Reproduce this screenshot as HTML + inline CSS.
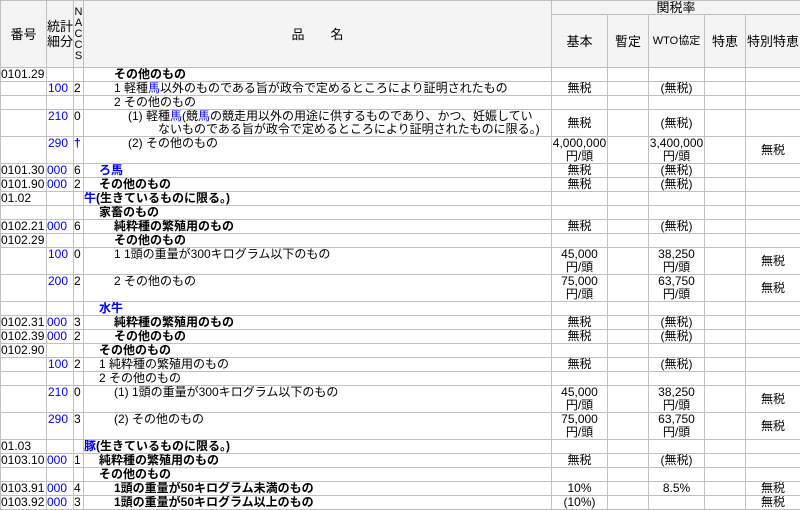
<!DOCTYPE html>
<html><head><meta charset="utf-8"><style>
body{margin:0;background:#fff;width:800px;height:500px;overflow:hidden}
table{border-collapse:collapse;table-layout:fixed;width:800px;font-family:"Liberation Sans","Noto Sans CJK JP",sans-serif;font-size:12px;line-height:13px;color:#000}
td{border:1px solid #c0c0c0;padding:0;vertical-align:top;white-space:nowrap;overflow:hidden}
thead td{background:#f4f4f4;vertical-align:middle;text-align:center;font-size:13px}
.b{color:#00f}
.c{text-align:center}
.r{padding-left:1px}
.m{vertical-align:middle;text-align:center}
.bd{font-weight:bold}
.i1{padding-left:15px}.i2{padding-left:30px}.i3{padding-left:44px}
</style></head><body>
<table>
<colgroup><col style="width:46px"><col style="width:27px"><col style="width:10px"><col style="width:468px"><col style="width:56px"><col style="width:41px"><col style="width:56px"><col style="width:41px"><col style="width:55px"></colgroup>
<thead>
<tr style="height:14px"><td rowspan="2">番号</td><td rowspan="2" style="line-height:15px">統計<br>細分</td><td rowspan="2" style="line-height:11px;font-size:11px">N<br>A<br>C<br>C<br>S</td><td rowspan="2">品　　名</td><td colspan="5" style="height:13px">関税率</td></tr>
<tr style="height:53px"><td>基本</td><td>暫定</td><td style="font-size:11px">WTO協定</td><td>特恵</td><td>特別特恵</td></tr>
</thead>
<tbody>
<tr style="height:13px"><td>0101.29</td><td></td><td></td><td class="i2 bd">その他のもの</td><td></td><td></td><td></td><td></td><td></td></tr>
<tr style="height:14px"><td></td><td class="b r">100</td><td>2</td><td class="i2">1 軽種<span class="b">馬</span>以外のものである旨が政令で定めるところにより証明されたもの</td><td class="c">無税</td><td></td><td class="c">(無税)</td><td></td><td></td></tr>
<tr style="height:13px"><td></td><td></td><td></td><td class="i2">2 その他のもの</td><td></td><td></td><td></td><td></td><td></td></tr>
<tr style="height:27px"><td></td><td class="b r">210</td><td>0</td><td class="i2"><span style="padding-left:14px">(1) 軽種<span class="b">馬</span>(競<span class="b">馬</span>の競走用以外の用途に供するものであり、かつ、妊娠してい</span><br><span style="padding-left:44px">ないものである旨が政令で定めるところにより証明されたものに限る。)</span></td><td class="m">無税</td><td></td><td class="m">(無税)</td><td></td><td></td></tr>
<tr style="height:27px"><td></td><td class="b r">290</td><td class="b bd">†</td><td class="i3">(2) その他のもの</td><td class="c">4,000,000<br>円/頭</td><td></td><td class="c">3,400,000<br>円/頭</td><td></td><td class="m">無税</td></tr>
<tr style="height:14px"><td>0101.30</td><td class="b">000</td><td>6</td><td class="i1 bd b">ろ馬</td><td class="c">無税</td><td></td><td class="c">(無税)</td><td></td><td></td></tr>
<tr style="height:14px"><td>0101.90</td><td class="b">000</td><td>2</td><td class="i1 bd">その他のもの</td><td class="c">無税</td><td></td><td class="c">(無税)</td><td></td><td></td></tr>
<tr style="height:14px"><td>01.02</td><td></td><td></td><td class="bd"><span class="b">牛</span>(生きているものに限る。)</td><td></td><td></td><td></td><td></td><td></td></tr>
<tr style="height:13px"><td></td><td></td><td></td><td class="i1 bd">家畜のもの</td><td></td><td></td><td></td><td></td><td></td></tr>
<tr style="height:14px"><td>0102.21</td><td class="b">000</td><td>6</td><td class="i2 bd">純粋種の繁殖用のもの</td><td class="c">無税</td><td></td><td class="c">(無税)</td><td></td><td></td></tr>
<tr style="height:14px"><td>0102.29</td><td></td><td></td><td class="i2 bd">その他のもの</td><td></td><td></td><td></td><td></td><td></td></tr>
<tr style="height:27px"><td></td><td class="b r">100</td><td>0</td><td class="i2">1 1頭の重量が300キログラム以下のもの</td><td class="c">45,000<br>円/頭</td><td></td><td class="c">38,250<br>円/頭</td><td></td><td class="m">無税</td></tr>
<tr style="height:27px"><td></td><td class="b r">200</td><td>2</td><td class="i2">2 その他のもの</td><td class="c">75,000<br>円/頭</td><td></td><td class="c">63,750<br>円/頭</td><td></td><td class="m">無税</td></tr>
<tr style="height:14px"><td></td><td></td><td></td><td class="i1 bd b">水牛</td><td></td><td></td><td></td><td></td><td></td></tr>
<tr style="height:14px"><td>0102.31</td><td class="b">000</td><td>3</td><td class="i2 bd">純粋種の繁殖用のもの</td><td class="c">無税</td><td></td><td class="c">(無税)</td><td></td><td></td></tr>
<tr style="height:14px"><td>0102.39</td><td class="b">000</td><td>2</td><td class="i2 bd">その他のもの</td><td class="c">無税</td><td></td><td class="c">(無税)</td><td></td><td></td></tr>
<tr style="height:14px"><td>0102.90</td><td></td><td></td><td class="i1 bd">その他のもの</td><td></td><td></td><td></td><td></td><td></td></tr>
<tr style="height:14px"><td></td><td class="b r">100</td><td>2</td><td class="i1">1 純粋種の繁殖用のもの</td><td class="c">無税</td><td></td><td class="c">(無税)</td><td></td><td></td></tr>
<tr style="height:14px"><td></td><td></td><td></td><td class="i1">2 その他のもの</td><td></td><td></td><td></td><td></td><td></td></tr>
<tr style="height:27px"><td></td><td class="b r">210</td><td>0</td><td class="i2">(1) 1頭の重量が300キログラム以下のもの</td><td class="c">45,000<br>円/頭</td><td></td><td class="c">38,250<br>円/頭</td><td></td><td class="m">無税</td></tr>
<tr style="height:27px"><td></td><td class="b r">290</td><td>3</td><td class="i2">(2) その他のもの</td><td class="c">75,000<br>円/頭</td><td></td><td class="c">63,750<br>円/頭</td><td></td><td class="m">無税</td></tr>
<tr style="height:13px"><td>01.03</td><td></td><td></td><td class="bd"><span class="b">豚</span>(生きているものに限る。)</td><td></td><td></td><td></td><td></td><td></td></tr>
<tr style="height:14px"><td>0103.10</td><td class="b">000</td><td>1</td><td class="i1 bd">純粋種の繁殖用のもの</td><td class="c">無税</td><td></td><td class="c">(無税)</td><td></td><td></td></tr>
<tr style="height:14px"><td></td><td></td><td></td><td class="i1 bd">その他のもの</td><td></td><td></td><td></td><td></td><td></td></tr>
<tr style="height:14px"><td>0103.91</td><td class="b">000</td><td>4</td><td class="i2 bd">1頭の重量が50キログラム未満のもの</td><td class="c">10%</td><td></td><td class="c">8.5%</td><td></td><td class="c">無税</td></tr>
<tr style="height:14px"><td>0103.92</td><td class="b">000</td><td>3</td><td class="i2 bd">1頭の重量が50キログラム以上のもの</td><td class="c">(10%)</td><td></td><td class="c"></td><td></td><td class="c">無税</td></tr>
</tbody></table>
</body></html>
